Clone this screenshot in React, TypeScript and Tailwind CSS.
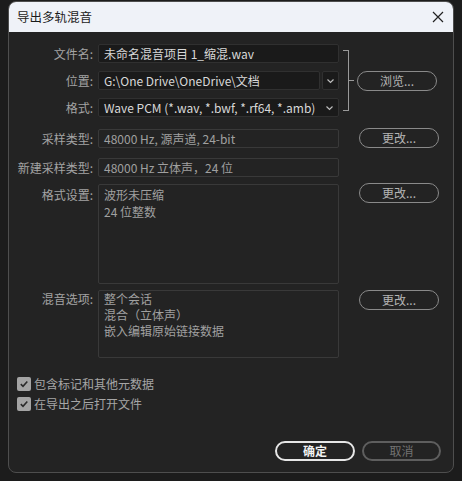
import React from "react";

const font = { fontFamily: '"Noto Sans CJK SC", "Noto Sans", sans-serif' };

function Label({ children }: { children: React.ReactNode }) {
  return <div className="w-[84px] shrink-0 text-right text-[12px] leading-[19px] text-[#a3a3a3]">{children}</div>;
}

function PillButton({ children, className = "" }: { children: React.ReactNode; className?: string }) {
  return (
    <button className={`flex h-[20px] w-[80px] items-center justify-center rounded-full border-[1.5px] border-[#8a8a8a] text-[12px] leading-none text-[#b4b4b4] ${className}`}>
      {children}
    </button>
  );
}

function Chevron() {
  return (
    <svg width="9" height="6" viewBox="0 0 9 6" fill="none" stroke="#bdbdbd" strokeWidth="1.2">
      <path d="M1.5 1.5 L4.5 4.5 L7.5 1.5" />
    </svg>
  );
}

function Check() {
  return (
    <span className="flex h-[14px] w-[14px] items-center justify-center rounded-[2px] bg-[#a4a4a4]">
      <svg width="10" height="10" viewBox="0 0 10 10" fill="none" stroke="#2a2a2a" strokeWidth="1.6">
        <path d="M1.8 5.2 L4 7.3 L8.3 2.5" />
      </svg>
    </span>
  );
}

export default function App() {
  return (
    <div className="h-[481px] w-[462px] overflow-hidden bg-[#1c1c1c] pl-[8px] pt-[1px]" style={font}>
      <div className="flex h-[472px] w-[446px] flex-col overflow-hidden rounded-[8px] border border-[#4e4e4e] bg-[#232323]">
        {/* title bar */}
        <div className="flex h-[30px] shrink-0 items-center justify-between bg-[#eff2f8] pl-[8px] pr-[8px]">
          <span className="text-[12.5px] text-[#1b1b1b]">导出多轨混音</span>
          <svg width="14" height="14" viewBox="0 0 14 14" stroke="#222" strokeWidth="1.2">
            <path d="M2 2 L12 12 M12 2 L2 12" />
          </svg>
        </div>

        <div className="flex flex-1 flex-col pt-[12px]">
          {/* file / location / format */}
          <div className="flex items-center">
            <div className="flex flex-col gap-2">
              <div className="flex items-center">
                <Label>文件名:</Label>
                <div className="ml-[5px] h-[19px] w-[241px] rounded-[2px] border border-[#303030] bg-[#1a1a1a] pl-[5px] text-[12px] leading-[17px] text-[#d8d8d8]">
                  未命名混音项目 1_缩混.wav
                </div>
              </div>
              <div className="flex items-center">
                <Label>位置:</Label>
                <div className="ml-[5px] flex w-[241px] gap-[2px]">
                  <div className="h-[19px] flex-1 rounded-[2px] border border-[#303030] bg-[#1a1a1a] pl-[5px] text-[12px] leading-[17px] text-[#d8d8d8]">
                    G:\One Drive\OneDrive\文档
                  </div>
                  <div className="flex h-[19px] w-[17px] items-center justify-center rounded-[2px] border border-[#303030] bg-[#1a1a1a]">
                    <Chevron />
                  </div>
                </div>
              </div>
              <div className="flex items-center">
                <Label>格式:</Label>
                <div className="ml-[5px] flex h-[19px] w-[241px] items-center justify-between rounded-[2px] border border-[#303030] bg-[#1a1a1a] pl-[5px] pr-[4px] text-[12px] leading-[17px] text-[#d8d8d8]">
                  <span>Wave PCM (*.wav, *.bwf, *.rf64, *.amb)</span>
                  <Chevron />
                </div>
              </div>
            </div>
            <div className="ml-[4px] flex items-center">
              <div className="h-[61px] w-[6px] border-y border-r border-[#9a9a9a]" />
              <div className="h-px w-[5px] bg-[#9a9a9a]" />
            </div>
            <PillButton className="ml-[3px]">浏览...</PillButton>
          </div>

          {/* sample type */}
          <div className="mt-[11px] flex items-center">
            <Label>采样类型:</Label>
            <div className="ml-[5px] h-[19px] w-[241px] rounded-[2px] border border-[#393939] pl-[5px] text-[12px] leading-[17px] text-[#a0a0a0]">
              48000 Hz, 源声道, 24-bit
            </div>
            <PillButton className="ml-[20px]">更改...</PillButton>
          </div>

          <div className="mt-[10px] flex items-center">
            <Label>新建采样类型:</Label>
            <div className="ml-[5px] h-[19px] w-[241px] rounded-[2px] border border-[#393939] pl-[5px] text-[12px] leading-[17px] text-[#a0a0a0]">
              48000 Hz 立体声，24 位
            </div>
          </div>

          {/* format settings */}
          <div className="mt-[7px] flex items-start">
            <div className="pt-[1px]">
              <Label>格式设置:</Label>
            </div>
            <div className="ml-[5px] h-[100px] w-[241px] rounded-[2px] border border-[#393939] pl-[5px] pt-[1px] text-[12px] leading-[17px] text-[#a0a0a0]">
              <div>波形未压缩</div>
              <div>24 位整数</div>
            </div>
            <PillButton className="ml-[20px] mt-[-1px]">更改...</PillButton>
          </div>

          {/* mix options */}
          <div className="mt-[6px] flex items-start">
            <div className="-mt-[1px]">
              <Label>混音选项:</Label>
            </div>
            <div className="ml-[5px] h-[68px] w-[241px] rounded-[2px] border border-[#393939] pl-[5px] text-[12px] leading-[16px] text-[#a0a0a0]">
              <div>整个会话</div>
              <div>混合（立体声）</div>
              <div>嵌入编辑原始链接数据</div>
            </div>
            <PillButton className="ml-[20px]">更改...</PillButton>
          </div>

          {/* checkboxes */}
          <div className="mt-[19px] flex flex-col gap-[6px] pl-[8px] text-[12px] leading-[14px] text-[#a6a6a6]">
            <label className="flex h-[14px] items-center gap-[3px]">
              <Check />
              <span>包含标记和其他元数据</span>
            </label>
            <label className="flex h-[14px] items-center gap-[3px]">
              <Check />
              <span>在导出之后打开文件</span>
            </label>
          </div>

          {/* footer */}
          <div className="mt-[30px] flex justify-end gap-[7px] pr-[12px]">
            <button className="flex h-[20px] w-[80px] items-center justify-center rounded-full border-2 border-[#e6e6e6] text-[12px] font-bold leading-none text-[#f2f2f2]">
              确定
            </button>
            <button className="flex h-[20px] w-[79px] items-center justify-center rounded-full border-2 border-[#5e5e5e] text-[12px] leading-none text-[#727272]">
              取消
            </button>
          </div>
        </div>
      </div>
    </div>
  );
}
